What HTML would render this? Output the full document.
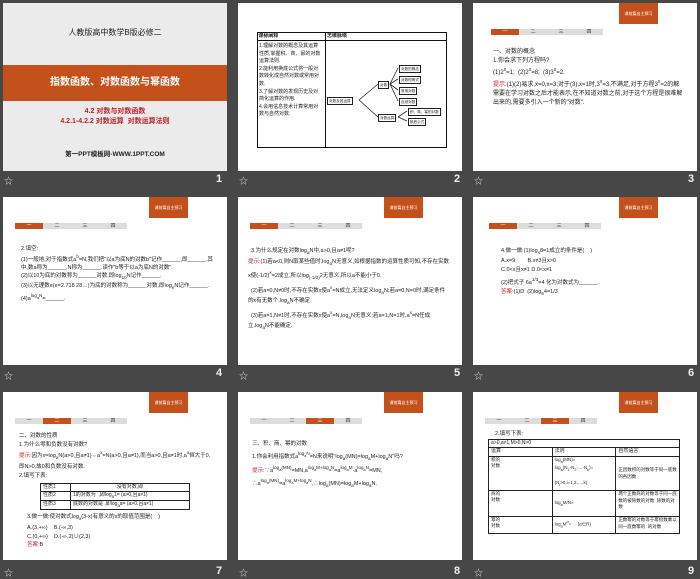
<!DOCTYPE html><html><head><meta charset="utf-8"><style>
*{margin:0;padding:0;box-sizing:border-box}
body{width:700px;height:578px;background:#474747;position:relative;overflow:hidden;font-family:"Liberation Sans","Noto Sans CJK SC",sans-serif;color:#222}
.s{position:absolute;width:224px;height:168px;background:#fff;overflow:hidden;font-size:6px;line-height:8.5px}
.n{position:absolute;color:#eee;font-size:11px;font-weight:bold}
.st{position:absolute;color:#ddd;font-size:9px}
.tag{position:absolute;left:146px;top:0;width:39px;height:21px;background:#c4501b;color:#fff;font-size:4px;text-align:center;line-height:21px}
.tabs{position:absolute;left:12px;top:26px;width:112px;height:6px;background:#ddd;display:flex}
.tabs div{flex:1;font-size:5px;line-height:6px;text-align:center;color:#333}
.tabs .a{background:#c4501b;color:#fff}
.r{color:#d0202a}
.t{position:absolute;left:14px;right:12px}
table{border-collapse:collapse;table-layout:fixed}
td{border:1px solid #222;font-size:5px;line-height:7px;padding:0 2px;vertical-align:top;overflow:hidden}
.b{position:absolute;border:0.8px solid #222;font-size:3.6px;line-height:6px;padding:0 1px;white-space:nowrap;background:#fff}
</style></head><body>

<!-- slide 1 -->
<div class="s" style="left:3px;top:3px;background:#ebebeb">
<div style="position:absolute;top:26px;width:100%;text-align:center;font-size:8px">人教版高中数学B版必修二</div>
<div style="position:absolute;top:62px;width:100%;height:36px;background:#c4501b;color:#fff;text-align:center;line-height:36px;font-size:10px;font-weight:bold">指数函数、对数函数与幂函数</div>
<div style="position:absolute;top:104px;width:100%;text-align:center;color:#c0202a;font-size:7px;font-weight:bold;line-height:10px">4.2 对数与对数函数<br>4.2.1-4.2.2 对数运算&nbsp; 对数运算法则</div>
<div style="position:absolute;top:148px;width:100%;text-align:center;font-size:6.5px;font-weight:bold">第一PPT模板网-WWW.1PPT.COM</div>
</div>
<div class="st" style="left:4px;top:174px">☆</div><div class="n" style="left:216px;top:173px">1</div>

<!-- slide 2 -->
<div class="s" style="left:238px;top:3px">
<div style="position:absolute;left:19px;top:29px;width:190px;height:116px;border:1.5px solid #111"></div>
<div style="position:absolute;left:19px;top:29px;width:190px;height:9px;border-bottom:1px solid #111;font-size:5px;line-height:9px;font-weight:bold">&nbsp;课标阐释<span style="position:absolute;left:70px">思维脉络</span></div>
<div style="position:absolute;left:87px;top:29px;height:116px;border-left:1px solid #111"></div>
<div style="position:absolute;left:21px;top:40px;width:64px;font-size:5px;line-height:7.6px">1.理解对数的概念及其运算性质,掌握积、商、幂的对数运算法则.<br>2.能利用换底公式将一般对数转化成自然对数或常用对数.<br>3.了解对数的发现历史及对简化运算的作用.<br>4.会用信息技术计算常用对数与自然对数.</div>
<svg style="position:absolute;left:0;top:0" width="224" height="168"><g fill="none" stroke="#222" stroke-width=".8"><path d="M121 97L140 81M121 97L140 114M152 81L160 65M152 81L160 76M152 81L160 87M152 81L160 98M160 114L169 108M160 114L169 118"/></g></svg>
<div class="b" style="left:89px;top:94px">对数及其运算</div>
<div class="b" style="left:140px;top:78px">对数</div>
<div class="b" style="left:140px;top:111px">对数运算</div>
<div class="b" style="left:161px;top:62px">对数的概念</div>
<div class="b" style="left:161px;top:73px">对数恒等式</div>
<div class="b" style="left:161px;top:84px">常用对数</div>
<div class="b" style="left:161px;top:95px">自然对数</div>
<div class="b" style="left:170px;top:105px">积、商、幂的对数</div>
<div class="b" style="left:170px;top:115px">换底公式</div>
</div>
<div class="st" style="left:239px;top:174px">☆</div><div class="n" style="left:454px;top:173px">2</div>

<!-- slide 3 -->
<div class="s" style="left:473px;top:3px">
<div class="tag">课前篇自主预习</div>
<div class="tabs" style="left:18px"><div class="a">一</div><div>二</div><div>三</div><div>四</div></div>
<div class="t" style="top:45px;left:20px;font-size:6px;line-height:9px">一、对数的概念<br>1.你会求下列方程吗?<br>(1)2<sup>x</sup>=1;&nbsp;&nbsp;(2)2<sup>x</sup>=8;&nbsp;&nbsp;(3)3<sup>x</sup>=2.<br><span class="r">提示:</span>(1)(2)易求,x=0,x=3;对于(3),x=1时,3<sup>x</sup>=3,不满足,对于方程3<sup>x</sup>=2的解需要在学习对数之后才能表示,在不知道对数之前,对于这个方程是很难解出来的,需要多引入一个新的"对数".</div>
</div>
<div class="st" style="left:474px;top:174px">☆</div><div class="n" style="left:688px;top:173px">3</div>

<!-- slide 4 -->
<div class="s" style="left:3px;top:197px">
<div class="tag">课前篇自主预习</div>
<div class="tabs"><div class="a">一</div><div>二</div><div>三</div><div>四</div></div>
<div class="t" style="top:48px;left:18px;font-size:5.5px;line-height:8px">2.填空:<br>(1)一般地,对于指数式a<sup>b</sup>=N,我们把"以a为底N的对数b"记作______,即______.其中,数a称为______,N称为______.读作"b等于以a为底N的对数".<br>(2)以10为底的对数称为______对数,即log<sub>10</sub>N记作______.<br>(3)以无理数e(e=2.718 28…)为底的对数称为______对数,即log<sub>e</sub>N记作______.<br>(4)a<sup>log<sub>a</sub>N</sup>=______.</div>
</div>
<div class="st" style="left:4px;top:369px">☆</div><div class="n" style="left:216px;top:367px">4</div>

<!-- slide 5 -->
<div class="s" style="left:238px;top:197px">
<div class="tag">课前篇自主预习</div>
<div class="tabs" style="left:12px"><div class="a">一</div><div>二</div><div>三</div><div>四</div></div>
<div class="t" style="top:50px;left:10px;font-size:5.5px;line-height:9.5px">&nbsp;&nbsp;3.为什么规定在对数log<sub>a</sub>N中,a&gt;0,且a≠1呢?<br><span class="r">提示:</span>(1)若a&lt;0,则N取某些值时,log<sub>a</sub>N无意义,如根据指数的运算性质可知,不存在实数x使(-1/2)<sup>x</sup>=2成立,所以log<sub>(-1/2)</sub>2无意义,所以a不能小于0.<br>&nbsp;&nbsp;(2)若a=0,N≠0时,不存在实数x使a<sup>x</sup>=N成立,无法定义log<sub>a</sub>N;若a=0,N=0时,满足条件的x有无数个,log<sub>a</sub>N不确定.<br>&nbsp;&nbsp;(3)若a=1,N≠1时,不存在实数x使a<sup>x</sup>=N,log<sub>a</sub>N无意义;若a=1,N=1时,a<sup>x</sup>=N任成立,log<sub>a</sub>N不能确定.</div>
</div>
<div class="st" style="left:239px;top:369px">☆</div><div class="n" style="left:454px;top:367px">5</div>

<!-- slide 6 -->
<div class="s" style="left:473px;top:197px">
<div class="tag">课前篇自主预习</div>
<div class="tabs" style="left:16px"><div class="a">一</div><div>二</div><div>三</div><div>四</div></div>
<div class="t" style="top:50px;left:28px;font-size:5.5px;line-height:9px">4.做一做:(1)log<sub>x</sub>8=1成立的条件是(&nbsp;&nbsp;&nbsp;&nbsp;)<br>A.x=9&nbsp;&nbsp;&nbsp;&nbsp;&nbsp;&nbsp;&nbsp;&nbsp;B.x≠3且x&gt;0<br>C.0&lt;x且x≠1&nbsp;D.0&lt;x≠1<br>(2)把式子 6a<sup>1/3</sup>=4 化为对数式为______.<br><span class="r">答案:</span>(1)D&nbsp;&nbsp;(2)log<sub>6</sub>4=1/3</div>
</div>
<div class="st" style="left:474px;top:369px">☆</div><div class="n" style="left:688px;top:367px">6</div>

<!-- slide 7 -->
<div class="s" style="left:3px;top:392px">
<div class="tag">课前篇自主预习</div>
<div class="tabs"><div>一</div><div class="a">二</div><div>三</div><div>四</div></div>
<div class="t" style="top:40px;left:16px;font-size:5.5px;line-height:8.7px">二、对数的性质<br>1.为什么零和负数没有对数?<br><span class="r">提示:</span>因为x=log<sub>a</sub>N(a&gt;0,且a≠1)⇔a<sup>x</sup>=N(a&gt;0,且a≠1),而当a&gt;0,且a≠1时,a<sup>x</sup>恒大于0,即N&gt;0,故0和负数没有对数.<br>2.填写下表:</div>
<table style="position:absolute;left:37px;top:91px;width:150px;border:1.5px solid #111"><tr><td style="width:30px">性质1</td><td style="text-align:center">没有对数,即</td></tr><tr><td>性质2</td><td>1的对数为&nbsp;&nbsp;,即log<sub>a</sub>1=&nbsp;(a&gt;0,且a≠1)</td></tr><tr><td>性质3</td><td>底数的对数是&nbsp;,即log<sub>a</sub>a=&nbsp;(a&gt;0,且a≠1)</td></tr></table>
<div class="t" style="top:121px;left:24px;font-size:5.5px;line-height:8.7px">3.做一做:使对数式log<sub>x</sub>(3-x)有意义的x的取值范围是(&nbsp;&nbsp;&nbsp;&nbsp;)<br>A.(3,+∞)&nbsp;&nbsp;&nbsp;&nbsp;B.(-∞,3)<br>C.(0,+∞)&nbsp;&nbsp;&nbsp;&nbsp;D.(-∞,2)∪(2,3)<br><span class="r">答案:</span>B</div>
</div>
<div class="st" style="left:4px;top:566px">☆</div><div class="n" style="left:216px;top:565px">7</div>

<!-- slide 8 -->
<div class="s" style="left:238px;top:392px">
<div class="tag">课前篇自主预习</div>
<div class="tabs" style="left:12px"><div>一</div><div>二</div><div class="a">三</div><div>四</div></div>
<div class="t" style="top:48px;left:14px;font-size:5.5px;line-height:9px">三、积、商、幂的对数<br>1.你会利用指数式a<sup>log<sub>a</sub>N</sup>=N来说明"log<sub>a</sub>(MN)=log<sub>a</sub>M+log<sub>a</sub>N"吗?<br><span class="r">提示:</span>∵a<sup>log<sub>a</sub>(MN)</sup>=MN,a<sup>log<sub>a</sub>M+log<sub>a</sub>N</sup>=a<sup>log<sub>a</sub>M</sup>·a<sup>log<sub>a</sub>N</sup>=MN,<br>∴a<sup>log<sub>a</sub>(MN)</sup>=a<sup>log<sub>a</sub>M+log<sub>a</sub>N</sup>,∴log<sub>a</sub>(MN)=log<sub>a</sub>M+log<sub>a</sub>N.</div>
</div>
<div class="st" style="left:239px;top:566px">☆</div><div class="n" style="left:454px;top:565px">8</div>

<!-- slide 9 -->
<div class="s" style="left:473px;top:392px">
<div class="tag">课前篇自主预习</div>
<div class="tabs"><div>一</div><div>二</div><div class="a">三</div><div>四</div></div>
<div class="t" style="top:38px;left:22px;font-size:5.5px">2.填写下表:</div>
<table style="position:absolute;left:15px;top:47px;width:192px;border:1.5px solid #111">
<tr style="height:8px"><td colspan="3" style="line-height:6px">a&gt;0,a≠1,M&gt;0,N&gt;0</td></tr>
<tr style="height:9px"><td style="width:15px;line-height:6px">运算</td><td style="width:80px;line-height:6px">法则</td><td style="line-height:6px">自然语言</td></tr>
<tr style="height:34px"><td style="font-size:4.5px;line-height:6px">积的<br>对数</td><td style="font-size:4.5px;line-height:6.5px">log<sub>a</sub>(MN)=<br>log<sub>a</sub>(N<sub>1</sub>·N<sub>2</sub>·…·N<sub>k</sub>)=<br><br>(N<sub>i</sub>&gt;0,i=1,2,…,k)</td><td style="font-size:4.5px;line-height:6.5px;vertical-align:middle">正因数积的对数等于同一底数的各因数</td></tr>
<tr style="height:26px"><td style="font-size:4.5px;line-height:6px">商的<br>对数</td><td style="font-size:4.5px;vertical-align:middle">log<sub>a</sub>M/N=</td><td style="font-size:4.5px;line-height:6.5px">两个正数商的对数等于同一底数的被除数的对数&nbsp;&nbsp;除数的对数</td></tr>
<tr style="height:17px"><td style="font-size:4.5px;line-height:6px">幂的<br>对数</td><td style="font-size:4.5px;vertical-align:middle">log<sub>a</sub>M<sup>α</sup>=&nbsp;&nbsp;&nbsp;&nbsp;&nbsp;(α∈R)</td><td style="font-size:4.5px;line-height:6.5px">正数幂的对数等于幂指数乘以同一底数幂的&nbsp;&nbsp;的对数</td></tr>
</table>
</div>
<div class="st" style="left:474px;top:566px">☆</div><div class="n" style="left:688px;top:565px">9</div>
</body></html>
